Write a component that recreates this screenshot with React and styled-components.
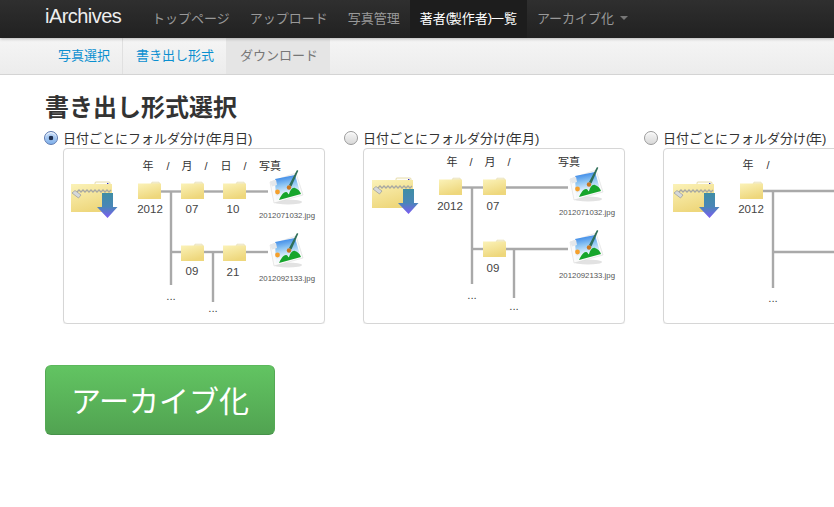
import React from "react";
import styled, { createGlobalStyle } from "styled-components";

const sans = `"Liberation Sans", "Noto Sans CJK JP", sans-serif`;

const subItems = ["写真選択", "書き出し形式", "ダウンロード"];

const options = [
  {
    label: "年月日",
    checked: true,
    headerY: 22,
    headers: [["年", 85], ["/", 105], ["月", 124], ["/", 143], ["日", 163], ["/", 182], ["写真", 207]],
    zip: [8, 34],
    folders: [[75, 34], [118, 34], [160, 34], [118, 96], [160, 96]],
    lines: [
      [98, 43.5, 118, 43.5], [141, 43.5, 160, 43.5], [183, 43.5, 205, 43.5], [108, 43.5, 108, 137],
      [108, 104, 118, 104], [141, 104, 160, 104], [183, 104, 205, 104], [150, 104, 150, 154],
    ],
    labels: [["2012", 87, 65], ["07", 129, 65], ["10", 170, 65], ["09", 129, 127], ["21", 170, 128]],
    dots: [[108, 152], [150, 164]],
    photos: [[206, 19, 70], [206, 82, 133]],
    photoNames: ["2012071032.jpg", "2012092133.jpg"],
  },
  {
    label: "年月",
    headerY: 18,
    headers: [["年", 89], ["/", 108], ["月", 127], ["/", 146], ["写真", 206]],
    zip: [9, 30],
    folders: [[76, 30], [120, 30], [120, 92]],
    lines: [
      [99, 39.5, 120, 39.5], [143, 39.5, 205, 39.5], [109, 39.5, 109, 136],
      [109, 101, 120, 101], [143, 101, 205, 101], [151, 101, 151, 150],
    ],
    labels: [["2012", 87, 62], ["07", 130, 62], ["09", 130, 124]],
    dots: [[109, 151], [151, 162]],
    photos: [[206, 16, 67], [206, 79, 130]],
    photoNames: ["2012071032.jpg", "2012092133.jpg"],
  },
  {
    label: "年",
    headerY: 21,
    headers: [["年", 85], ["/", 105]],
    zip: [10, 34],
    folders: [[77, 34]],
    lines: [[100, 43, 262, 43], [110, 43, 110, 140], [110, 104, 262, 104]],
    labels: [["2012", 88, 65]],
    dots: [[110, 154]],
    photos: [],
    photoNames: [],
  },
];

function Gradients() {
  return (
    <HiddenDefs aria-hidden="true">
      <defs>
        <linearGradient id="folderFill" x1="0" y1="0" x2="0.4" y2="1">
          <stop offset="0" stopColor="#fbf2b8" />
          <stop offset="1" stopColor="#eed77c" />
        </linearGradient>
        <linearGradient id="arrowFill" x1="0" y1="0" x2="0" y2="1">
          <stop offset="0" stopColor="#3f8da4" />
          <stop offset="0.55" stopColor="#4a86b8" />
          <stop offset="1" stopColor="#7c5cf2" />
        </linearGradient>
        <linearGradient id="skyFill" x1="0.2" y1="0" x2="0.4" y2="1">
          <stop offset="0" stopColor="#2a7ce6" />
          <stop offset="0.4" stopColor="#8cc4f2" />
          <stop offset="0.8" stopColor="#f2f8fc" />
        </linearGradient>
      </defs>
    </HiddenDefs>
  );
}

function Folder({ x, y }) {
  return (
    <g transform={`translate(${x} ${y})`}>
      <path d="M13 2 L14 0 L21 0 L22 2 Z" fill="#f4efd8" stroke="#ddd3a0" strokeWidth="0.4" />
      <rect x="0" y="1.5" width="23" height="15.5" fill="url(#folderFill)" />
    </g>
  );
}

function ZipFolder({ x, y }) {
  return (
    <g transform={`translate(${x} ${y})`}>
      <rect x="24" y="0" width="15" height="4" rx="1" fill="#fdfdf6" stroke="#d8c878" strokeWidth="0.6" />
      <rect x="36" y="1" width="1.4" height="1.4" fill="#3030c0" />
      <rect x="0" y="2" width="41" height="28" fill="url(#folderFill)" />
      <path d="M6 10 L8 8 L10 10 L12 8 L14 10 L16 8 L18 10 L20 8 L22 10 L24 8 L26 10 L28 8 L30 10 L32 8 L34 10 L36 8 L38 10 L40 8"
        fill="none" stroke="#a8a8a2" strokeWidth="1.3" />
      <path d="M1 11 L4 8.5 L10 13 L7.5 16 Z" fill="#d5d8da" stroke="#8b8f92" strokeWidth="0.6" />
      <path d="M31 11 H42 V25 H46.5 L36.5 36 L26 25 H31 Z" fill="url(#arrowFill)" />
    </g>
  );
}

function PhotoIcon({ x, y }) {
  return (
    <g transform={`translate(${x} ${y})`}>
      <ellipse cx="19" cy="35" rx="14" ry="2.5" fill="#e2e2e2" />
      <path d="M1 15 L27 6 L34 28 L5 36 Z" fill="#fbfbfb" stroke="#d5d5d5" strokeWidth="0.5" />
      <path d="M6 12 L26 8 L31.5 26.5 L7 33 Z" fill="url(#skyFill)" />
      <path d="M1 15 L7 12.5 L8 18 L3 19.5 Z" fill="#e4e7ea" />
      <path d="M10 33 C12 29 14 25 17 25 C19 25 19 28 20 27 C21 24 23 20 26 21 C29 22 31 24 32 27 Z" fill="#16a52c" />
      <circle cx="8.5" cy="25" r="2.4" fill="#f5a02c" />
      <path d="M20 18 L28 3 L29.3 3.8 L22.5 19.5 Z" fill="#2f6f58" />
      <circle cx="20" cy="20.5" r="2.2" fill="#c9761e" />
    </g>
  );
}

function Diagram({ option }) {
  return (
    <DiagramSvg viewBox="0 0 262 176" width="262" height="176">
      {option.headers.map(([text, x], i) => (
        <HeaderText key={i} x={x} y={option.headerY} textAnchor="middle">{text}</HeaderText>
      ))}
      {option.lines.map(([x1, y1, x2, y2], i) => (
        <line key={i} x1={x1} y1={y1} x2={x2} y2={y2} stroke="#a9a9a9" strokeWidth="2.4" />
      ))}
      <ZipFolder x={option.zip[0]} y={option.zip[1]} />
      {option.folders.map(([x, y], i) => <Folder key={i} x={x} y={y} />)}
      {option.labels.map(([text, x, y], i) => (
        <NodeText key={i} x={x} y={y} textAnchor="middle">{text}</NodeText>
      ))}
      {option.dots.map(([x, y], i) => (
        <NodeText key={i} x={x} y={y} textAnchor="middle">...</NodeText>
      ))}
      {option.photos.map(([x, y, nameY], i) => (
        <g key={i}>
          <PhotoIcon x={x} y={y} />
          <FileText x={x + 18} y={nameY} textAnchor="middle">{option.photoNames[i]}</FileText>
        </g>
      ))}
    </DiagramSvg>
  );
}

export default function App() {
  return (
    <>
      <GlobalStyle />
      <Gradients />
      <Navbar>
        <Brand>iArchives</Brand>
        <NavLink>トップページ</NavLink>
        <NavLink>アップロード</NavLink>
        <NavLink>写真管理</NavLink>
        <NavLink $active>著者<Paren>(</Paren>製作者<Paren>)</Paren>一覧</NavLink>
        <NavLink>
          アーカイブ化
          <Caret />
        </NavLink>
      </Navbar>
      <SubNav>
        {subItems.map((item, i) => (
          <SubTab key={item} $current={i === 2} $divider={i === 0}>{item}</SubTab>
        ))}
      </SubNav>
      <Main>
        <Heading>書き出し形式選択</Heading>
        <OptionRow>
          {options.map((option) => (
            <Option key={option.label}>
              <OptionLabel>
                <Radio type="radio" name="format" defaultChecked={option.checked} />
                <span>日付ごとにフォルダ分け<Paren>(</Paren>{option.label}<Paren>)</Paren></span>
              </OptionLabel>
              <Card>
                <Diagram option={option} />
              </Card>
            </Option>
          ))}
        </OptionRow>
        <ArchiveButton type="button">アーカイブ化</ArchiveButton>
      </Main>
    </>
  );
}

const GlobalStyle = createGlobalStyle`
  html, body {
    margin: 0;
    background: #fff;
    overflow: hidden;
    font-family: ${sans};
  }
`;

const HiddenDefs = styled.svg`
  display: block;
  width: 0;
  height: 0;
`;

const Navbar = styled.nav`
  display: flex;
  height: 38px;
  padding-left: 45px;
  background: linear-gradient(#2f2f2f, #212121);
  box-shadow: 0 1px 3px rgba(0, 0, 0, 0.25);
  position: relative;
`;

const Brand = styled.div`
  width: 97px;
  font-size: 20px;
  line-height: 33px;
  letter-spacing: -0.55px;
  font-weight: 400;
  color: #eee;
`;

const NavLink = styled.div`
  display: flex;
  align-items: center;
  padding: 0 10px 4px;
  font-size: 13px;
  color: ${(p) => (p.$active ? "#fff" : "#999")};
  background: ${(p) => (p.$active ? "#1d1d1d" : "transparent")};
`;

const Paren = styled.span`
  letter-spacing: -1.3px;
`;

const Caret = styled.span`
  margin: 1px 0 0 6px;
  border-left: 4px solid transparent;
  border-right: 4px solid transparent;
  border-top: 4px solid #777;
`;

const SubNav = styled.div`
  display: flex;
  height: 36px;
  padding-left: 45px;
  background: linear-gradient(#f5f5f5, #ececec);
  border-bottom: 1px solid #d4d4d4;
`;

const SubTab = styled.div`
  display: flex;
  align-items: center;
  padding: 0 12px 4px ${(p) => (p.$current ? "14px" : "13px")};
  font-size: 13px;
  color: ${(p) => (p.$current ? "#777" : "#0a8fd0")};
  background: ${(p) => (p.$current ? "#e5e5e5" : "transparent")};
  border-right: ${(p) => (p.$divider ? "1px solid #e0e0e0" : "0")};
`;

const Main = styled.main`
  padding: 19px 0 0 45px;
`;

const Heading = styled.h1`
  margin: 0 0 8px;
  font-size: 24px;
  line-height: 27px;
  font-weight: 700;
  color: #333;
`;

const OptionRow = styled.div`
  display: flex;
  width: 789px;
  overflow: hidden;
  margin-left: -1px;
  padding-left: 1px;
`;

const Option = styled.div`
  flex: 0 0 300px;
`;

const OptionLabel = styled.label`
  display: flex;
  align-items: center;
  gap: 5px;
  height: 16px;
  margin-left: -1px;
  font-size: 13px;
  color: #333;
`;

const Radio = styled.input`
  appearance: none;
  flex: none;
  width: 14px;
  height: 14px;
  margin: 1px 0 0;
  border-radius: 50%;
  border: 1px solid #9a9a9a;
  background: linear-gradient(#f6f6f6, #d9d9d9);
  box-shadow: inset 0 1px 1px #fff;

  &:checked {
    border-color: #5a78b0;
    background: radial-gradient(circle, #1f2f4f 0 2px, transparent 2.6px),
      linear-gradient(#c6dcf8, #7fb0ea);
  }
`;

const Card = styled.div`
  width: 260px;
  height: 174px;
  margin: 3px 0 0 18px;
  border: 1px solid #d6d6d6;
  border-radius: 4px;
  box-shadow: 0 1px 1px rgba(0, 0, 0, 0.06);
  background: #fff;
`;

const DiagramSvg = styled.svg`
  display: block;
  margin: -1px;
`;

const HeaderText = styled.text`
  font-size: 11px;
  fill: #333;
`;

const NodeText = styled.text`
  font-size: 11.5px;
  fill: #444;
`;

const FileText = styled.text`
  font-size: 7.8px;
  fill: #555;
`;

const ArchiveButton = styled.button`
  display: block;
  width: 230px;
  height: 70px;
  margin-top: 41px;
  padding: 0 0 3px;
  font-family: ${sans};
  font-size: 30px;
  color: #fff;
  background: linear-gradient(#62c462, #51a351);
  border: 1px solid #4f9f4f;
  border-color: #5cb85c #55a955 #47914a;
  border-radius: 6px;
`;
